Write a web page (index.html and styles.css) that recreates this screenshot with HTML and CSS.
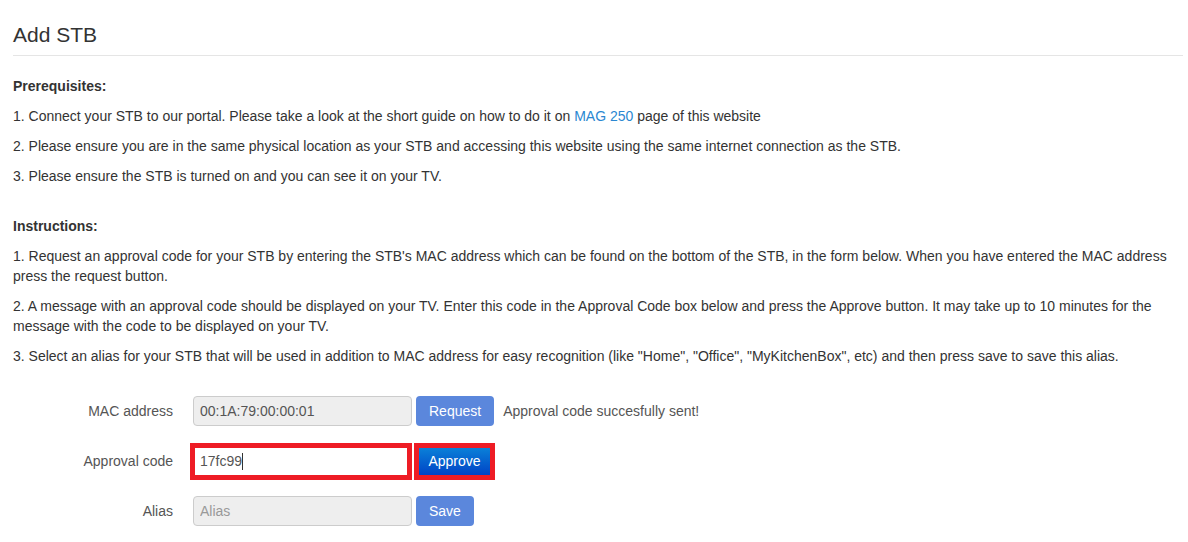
FILE: index.html
```html
<!DOCTYPE html>
<html>
<head>
<meta charset="utf-8">
<title>Add STB</title>
<link rel="stylesheet" href="styles.css">
</head>
<body>
<div class="page">
  <div class="page-header"><h1 class="title">Add STB</h1></div>
  <section class="block">
    <p class="heading">Prerequisites:</p>
    <p>1. Connect your STB to our portal. Please take a look at the short guide on how to do it on <a class="link" href="#">MAG 250</a> page of this website</p>
    <p>2. Please ensure you are in the same physical location as your STB and accessing this website using the same internet connection as the STB.</p>
    <p>3. Please ensure the STB is turned on and you can see it on your TV.</p>
  </section>
  <section class="block">
    <p class="heading">Instructions:</p>
    <p>1. Request an approval code for your STB by entering the STB's MAC address which can be found on the bottom of the STB, in the form below. When you have entered the MAC address press the request button.</p>
    <p>2. A message with an approval code should be displayed on your TV. Enter this code in the Approval Code box below and press the Approve button. It may take up to 10 minutes for the message with the code to be displayed on your TV.</p>
    <p>3. Select an alias for your STB that will be used in addition to MAC address for easy recognition (like "Home", "Office", "MyKitchenBox", etc) and then press save to save this alias.</p>
  </section>
  <form class="form">
    <div class="row">
      <label class="label">MAC address</label>
      <input class="field readonly" type="text" value="00:1A:79:00:00:01" readonly>
      <button class="btn btn-muted" type="button">Request</button>
      <span class="status">Approval code succesfully sent!</span>
    </div>
    <div class="row">
      <label class="label">Approval code</label>
      <div class="mark mark-input">
        <input class="field active" type="text" value="17fc99">
        <span class="caret"></span>
      </div>
      <div class="mark mark-btn">
        <button class="btn btn-active" type="button">Approve</button>
      </div>
    </div>
    <div class="row">
      <label class="label">Alias</label>
      <input class="field readonly" type="text" placeholder="Alias" readonly>
      <button class="btn btn-muted" type="button">Save</button>
    </div>
  </form>
</div>
</body>
</html>
```

FILE: styles.css
```css
* { box-sizing: border-box; }
html, body { margin: 0; padding: 0; background: #fff; }
body {
  font-family: "Liberation Sans", Arial, Helvetica, sans-serif;
  font-size: 14px;
  line-height: 20px;
  color: #333;
}
.page { padding: 0 5px 0 13px; }
.page-header {
  padding-top: 23px;
  padding-bottom: 9px;
  border-bottom: 1px solid #e5e5e5;
}
.title {
  margin: 0;
  font-size: 21px;
  line-height: 23px;
  font-weight: 400;
  color: #333;
}
.block { padding-top: 10px; }
.block p { margin: 10px 0 0 0; }
.block + .block { padding-top: 20px; }
.heading { font-weight: 700; }
.link { color: #2b87d1; text-decoration: none; }

.form { padding-top: 30px; }
.row {
  display: flex;
  align-items: center;
  height: 30px;
  margin-bottom: 20px;
}
.label {
  width: 160px;
  text-align: right;
  color: #555;
  margin-right: 20px;
}
.field {
  width: 219px;
  height: 30px;
  padding: 0 6px;
  border: 1px solid #ccc;
  border-radius: 4px;
  font-family: "Liberation Sans", Arial, sans-serif;
  font-size: 14px;
  color: #555;
  outline: none;
}
.field.readonly { background: #eee; }
.field::placeholder { color: #999; }
.btn {
  height: 30px;
  margin-left: 4px;
  padding: 0 13px;
  border: 0;
  border-radius: 4px;
  font-family: "Liberation Sans", Arial, sans-serif;
  font-size: 14px;
  font-weight: 400;
  color: #fff;
}
.btn-muted { background: #5b87dc; }
.status { margin-left: 9px; color: #555; }

.mark { position: relative; border: 5px solid #ee1c25; }
.mark-input {
  margin-left: -3px;
  width: 222px;
  height: 37px;
  background: #fff;
}
.mark-input .field {
  width: 212px;
  height: 27px;
  border: 0;
  border-radius: 0;
  padding-left: 5px;
}
.caret {
  position: absolute;
  left: 47px;
  top: 5px;
  width: 1px;
  height: 17px;
  background: #333;
}
.mark-btn {
  margin-left: 2px;
  width: 81px;
  height: 37px;
  padding: 0;
}
.btn-active {
  margin: 0;
  width: 71px;
  height: 27px;
  padding: 0;
  border-radius: 0;
  background: linear-gradient(#0a80d8, #0044c6);
}
```
